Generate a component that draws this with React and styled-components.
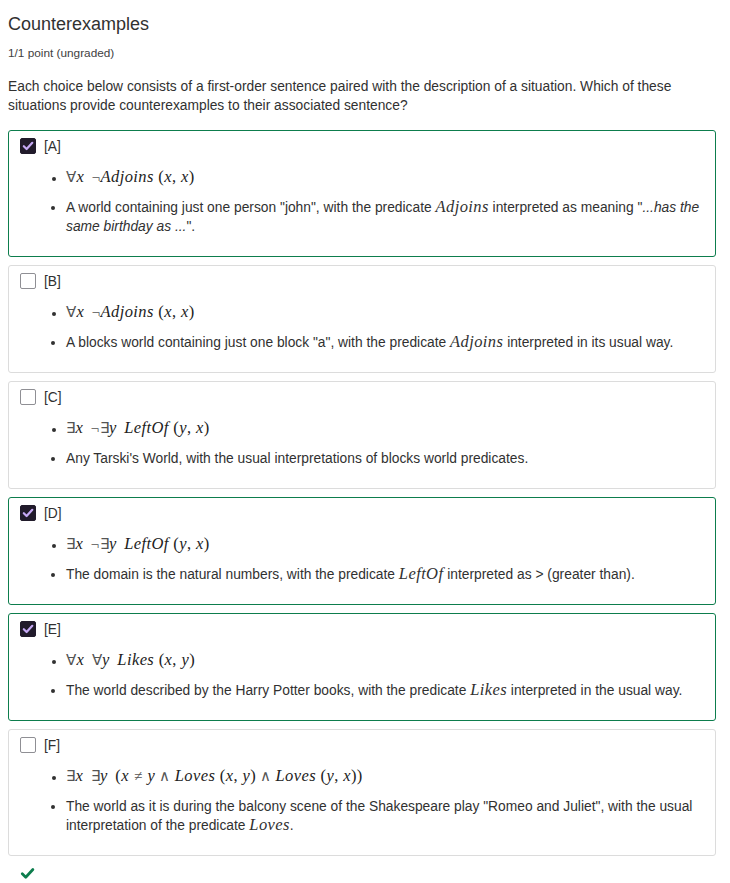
import React from "react";
import styled, { createGlobalStyle } from "styled-components";

const GlobalStyle = createGlobalStyle`
  body {
    margin: 0;
    background: #fff;
    font-family: "Liberation Sans", Arial, sans-serif;
    color: #313131;
  }
`;

const Page = styled.div`
  padding: 12px 8px 20px;
  width: 708px;
`;

const Title = styled.h2`
  margin: 0;
  font-size: 18px;
  line-height: 24px;
  font-weight: normal;
  color: #313131;
`;

const Points = styled.div`
  margin-top: 9px;
  font-size: 11.8px;
  line-height: 16px;
  color: #414141;
`;

const Prompt = styled.p`
  margin: 16px 0 15px;
  font-size: 13.8px;
  line-height: 19px;
  color: #313131;
`;

const Choices = styled.div`
  display: flex;
  flex-direction: column;
  gap: 8px;
`;

const Card = styled.div`
  border: 1px solid ${(p) => (p.$checked ? "#0d7d4d" : "#dcdcdc")};
  border-radius: 3px;
  padding: 7px 11px 20px;
  background: #fff;
`;

const Header = styled.div`
  display: flex;
  align-items: center;
  gap: 8px;
  height: 16px;
  font-size: 13.8px;
  color: #313131;
`;

const Box = styled.span`
  width: 16px;
  height: 16px;
  box-sizing: border-box;
  border-radius: 2px;
  display: flex;
  align-items: center;
  justify-content: center;
  background: ${(p) => (p.$checked ? "#211b2b" : "#fff")};
  border: 1px solid ${(p) => (p.$checked ? "#211b2b" : "#8f8f94")};
`;

const List = styled.ul`
  margin: 12px 0 0;
  padding-left: 46px;
  list-style: disc;
  display: flex;
  flex-direction: column;
  gap: 8px;
`;

const MathItem = styled.li`
  font-size: 12px;
  line-height: 24px;
  height: 24px;
`;

const TextItem = styled.li`
  font-size: 13.8px;
  line-height: 19px;
  color: #313131;
`;

const Formula = styled.span`
  font-family: "Liberation Serif", "Times New Roman", serif;
  font-size: 16.5px;
  line-height: 1;
  color: #222;
  letter-spacing: 0.4px;
`;

const V = styled.i`
  font-style: italic;
  margin-right: ${(p) => (p.$pad ? "3px" : "0")};
`;

const Op = styled.span`
  font-style: normal;
  font-size: 15px;
  color: #555;
  margin: 0 ${(p) => p.$gap || "0"};
`;

const InlineMath = styled.i`
  font-family: "Liberation Serif", "Times New Roman", serif;
  font-size: 16.5px;
  line-height: 0;
  font-style: italic;
  letter-spacing: 0.4px;
`;

const Done = styled.div`
  margin: 10px 0 0 12px;
  height: 16px;
`;

const Check = ({ color, size = 12 }) => (
  <svg width={size} height={size} viewBox="0 0 12 12">
    <path
      d="M1.8 6.2 L4.6 9 L10.3 2.8"
      fill="none"
      stroke={color}
      strokeWidth="2.2"
      strokeLinecap="round"
      strokeLinejoin="round"
    />
  </svg>
);

const Adjoins = () => (
  <Formula>
    <Op>∀</Op>
    <V $pad>x</V> <Op>¬</Op>
    <V>Adjoins</V> (<V>x</V>, <V>x</V>)
  </Formula>
);

const LeftOf = () => (
  <Formula>
    <Op>∃</Op>
    <V $pad>x</V> <Op>¬∃</Op>
    <V $pad>y</V> <V>LeftOf</V> (<V>y</V>, <V>x</V>)
  </Formula>
);

const choices = [
  {
    id: "A",
    checked: true,
    formula: <Adjoins />,
    text: (
      <>
        A world containing just one person "john", with the predicate{" "}
        <InlineMath>Adjoins</InlineMath> interpreted as meaning "<i>...has the same birthday as ...</i>".
      </>
    ),
  },
  {
    id: "B",
    checked: false,
    formula: <Adjoins />,
    text: (
      <>
        A blocks world containing just one block "a", with the predicate{" "}
        <InlineMath>Adjoins</InlineMath> interpreted in its usual way.
      </>
    ),
  },
  {
    id: "C",
    checked: false,
    formula: <LeftOf />,
    text: <>Any Tarski's World, with the usual interpretations of blocks world predicates.</>,
  },
  {
    id: "D",
    checked: true,
    formula: <LeftOf />,
    text: (
      <>
        The domain is the natural numbers, with the predicate <InlineMath>LeftOf</InlineMath> interpreted as
        &gt; (greater than).
      </>
    ),
  },
  {
    id: "E",
    checked: true,
    formula: (
      <Formula>
        <Op>∀</Op>
        <V $pad>x</V> <Op>∀</Op>
        <V $pad>y</V> <V>Likes</V> (<V>x</V>, <V>y</V>)
      </Formula>
    ),
    text: (
      <>
        The world described by the Harry Potter books, with the predicate <InlineMath>Likes</InlineMath>{" "}
        interpreted in the usual way.
      </>
    ),
  },
  {
    id: "F",
    checked: false,
    formula: (
      <Formula>
        <Op>∃</Op>
        <V $pad>x</V> <Op>∃</Op>
        <V $pad>y</V> (<V>x</V>
        <Op $gap="5px">≠</Op>
        <V>y</V>
        <Op $gap="4px">∧</Op>
        <V>Loves</V> (<V>x</V>, <V>y</V>)<Op $gap="4px">∧</Op>
        <V>Loves</V> (<V>y</V>, <V>x</V>))
      </Formula>
    ),
    text: (
      <>
        The world as it is during the balcony scene of the Shakespeare play "Romeo and Juliet", with the usual
        interpretation of the predicate <InlineMath>Loves</InlineMath>.
      </>
    ),
  },
];

export default function App() {
  return (
    <>
      <GlobalStyle />
      <Page>
        <Title>Counterexamples</Title>
        <Points>1/1 point (ungraded)</Points>
        <Prompt>
          Each choice below consists of a first-order sentence paired with the description of a situation. Which
          of these situations provide counterexamples to their associated sentence?
        </Prompt>
        <Choices>
          {choices.map((c) => (
            <Card key={c.id} $checked={c.checked}>
              <Header>
                <Box $checked={c.checked}>{c.checked && <Check color="#c6a9f5" />}</Box>
                <span>[{c.id}]</span>
              </Header>
              <List>
                <MathItem>{c.formula}</MathItem>
                <TextItem>{c.text}</TextItem>
              </List>
            </Card>
          ))}
        </Choices>
        <Done>
          <Check color="#0d7d4d" size={15} />
        </Done>
      </Page>
    </>
  );
}
